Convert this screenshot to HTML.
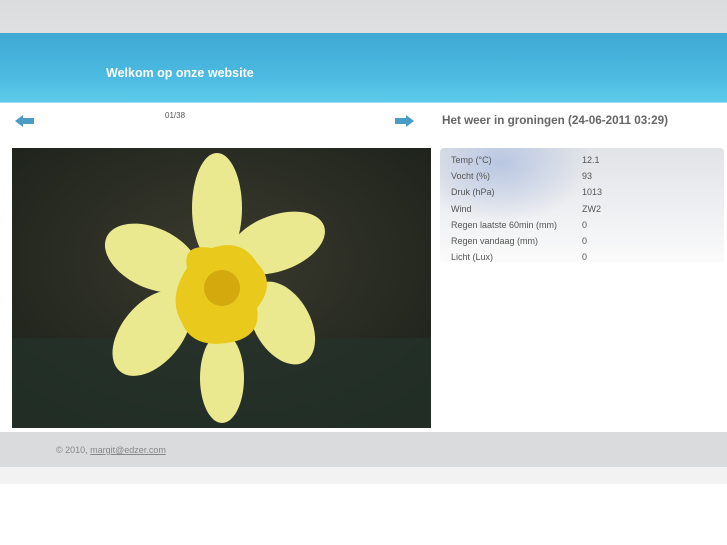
<!DOCTYPE html>
<html><head><style>
body{margin:0;width:727px;height:545px;background:#fff;font-family:"Liberation Sans",sans-serif;position:relative;overflow:hidden}
.a{position:absolute}
td{font-size:9px;color:#555;padding:0;height:16.2px}
</style></head><body>
<div class="a" style="left:0;top:0;width:727px;height:33px;background:linear-gradient(#dbdcde,#dfe0e2)"></div>
<div class="a" style="left:0;top:33px;width:727px;height:69px;background:linear-gradient(#3fa9d4,#4bb9e0 60%,#5ccbea)"></div>
<div class="a" style="left:0;top:102px;width:727px;height:1px;background:#9fdcf0"></div>
<div class="a" style="left:106px;top:66px;font-size:12.5px;font-weight:bold;color:#fff">Welkom op onze website</div>
<svg class="a" style="left:15px;top:115px" width="20" height="12"><path d="M0 6 L8 0 V3 H19 V9 H8 V12 Z" fill="#4a9cc4"/></svg>
<svg class="a" style="left:394px;top:115px" width="20" height="12"><path d="M20 6 L12 0 V3 H1 V9 H12 V12 Z" fill="#4a9cc4"/></svg>
<div class="a" style="left:165px;top:111px;font-size:8px;color:#555">01/38</div>
<div class="a" style="left:442px;top:114px;font-size:11.7px;font-weight:bold;color:#666">Het weer in groningen (24-06-2011 03:29)</div>
<div class="a" style="left:440px;top:148px;width:284px;height:114px;border-radius:4px;background:radial-gradient(ellipse 90px 60px at 60px 15px,#b9c7e2,rgba(230,233,238,0) 100%),linear-gradient(#e2e3e7,#f2f3f5 70%,#fbfbfb)"></div>
<table class="a" style="left:451px;top:152px;border-collapse:collapse" cellspacing="0">
<tr><td style="width:131px">Temp (°C)</td><td>12.1</td></tr>
<tr><td>Vocht (%)</td><td>93</td></tr>
<tr><td>Druk (hPa)</td><td>1013</td></tr>
<tr><td>Wind</td><td>ZW2</td></tr>
<tr><td>Regen laatste 60min (mm)</td><td>0</td></tr>
<tr><td>Regen vandaag (mm)</td><td>0</td></tr>
<tr><td>Licht (Lux)</td><td>0</td></tr>
</table>
<svg class="a" style="left:12px;top:148px" width="419" height="280">
<defs><radialGradient id="bg" cx="0.5" cy="0.4" r="0.7"><stop offset="0" stop-color="#3b3a2e"/><stop offset="1" stop-color="#1b211a"/></radialGradient></defs>
<rect width="419" height="280" fill="url(#bg)"/>
<rect x="0" y="190" width="419" height="90" fill="#24332b" opacity=".7"/>
<g fill="#ebe98f">
<ellipse cx="205" cy="60" rx="25" ry="55"/>
<ellipse cx="265" cy="95" rx="50" ry="28" transform="rotate(-20 265 95)"/>
<ellipse cx="140" cy="110" rx="50" ry="30" transform="rotate(25 140 110)"/>
<ellipse cx="270" cy="175" rx="28" ry="45" transform="rotate(-30 270 175)"/>
<ellipse cx="140" cy="185" rx="30" ry="50" transform="rotate(40 140 185)"/>
<ellipse cx="210" cy="230" rx="22" ry="45"/>
</g>
<path d="M175 120 Q170 95 200 100 Q230 90 245 115 Q265 135 245 160 Q250 190 215 195 Q180 200 170 175 Q155 150 175 120 Z" fill="#e9c91c"/>
<circle cx="210" cy="140" r="18" fill="#d3a90e"/>
</svg>
<div class="a" style="left:0;top:432px;width:727px;height:35px;background:#dadbdd"></div>
<div class="a" style="left:0;top:467px;width:727px;height:17px;background:#f2f2f2"></div>
<div class="a" style="left:56px;top:445px;font-size:9px;color:#888">© 2010, <span style="text-decoration:underline">margit@edzer.com</span></div>
</body></html>
